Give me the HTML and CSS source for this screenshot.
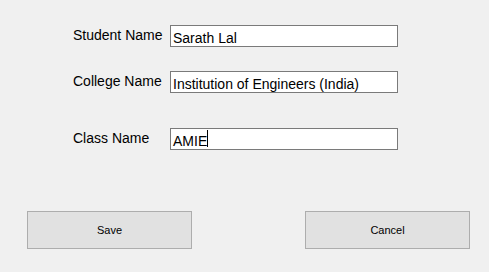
FILE: index.html
```html
<!DOCTYPE html>
<html lang="en">
<head>
    <meta charset="UTF-8">
    <meta name="viewport" content="width=device-width, initial-scale=1.0">
    <title>Student Details</title>
    <link rel="stylesheet" href="styles.css">
</head>
<body>
    <div class="form">
        <div class="fields">
            <div class="row">
                <label class="field-label">Student Name</label>
                <div class="textbox">Sarath Lal</div>
            </div>
            <div class="row row-college">
                <label class="field-label">College Name</label>
                <div class="textbox">Institution of Engineers (India)</div>
            </div>
            <div class="row row-class">
                <label class="field-label">Class Name</label>
                <div class="textbox">AMIE<span class="caret"></span></div>
            </div>
        </div>
        <div class="buttons">
            <button type="button" class="btn">Save</button>
            <button type="button" class="btn">Cancel</button>
        </div>
    </div>
</body>
</html>
```

FILE: styles.css
```css
body {
    margin: 0;
    padding: 0;
    background-color: #f0f0f0;
    font-family: "Liberation Sans", Arial, sans-serif;
    color: #000;
}
.form {
    width: 489px;
    height: 272px;
    padding-top: 25px;
    box-sizing: border-box;
}
.fields {
    margin-left: 73px;
    display: flex;
    flex-direction: column;
}
.row {
    display: flex;
    align-items: flex-start;
}
.row-college {
    margin-top: 24px;
}
.row-class {
    margin-top: 35px;
}
.field-label {
    width: 97px;
    margin-top: 2px;
    font-size: 14px;
    line-height: 16px;
}
.textbox {
    width: 228px;
    height: 22px;
    box-sizing: border-box;
    padding: 4px 2px 0;
    border: 1px solid #7a7a7a;
    background: #ffffff;
    font-size: 14px;
    line-height: 16px;
    white-space: nowrap;
    overflow: hidden;
}
.caret {
    display: inline-block;
    width: 1px;
    height: 17px;
    margin-top: -4px;
    vertical-align: -1px;
    background: #000;
}
.buttons {
    display: flex;
    justify-content: space-between;
    margin: 61px 19px 0 27px;
}
.btn {
    width: 165px;
    height: 38px;
    padding: 0;
    border: 1px solid #adadad;
    background-color: #e1e1e1;
    font-family: "Liberation Sans", Arial, sans-serif;
    font-size: 11px;
    color: #000;
}
```
